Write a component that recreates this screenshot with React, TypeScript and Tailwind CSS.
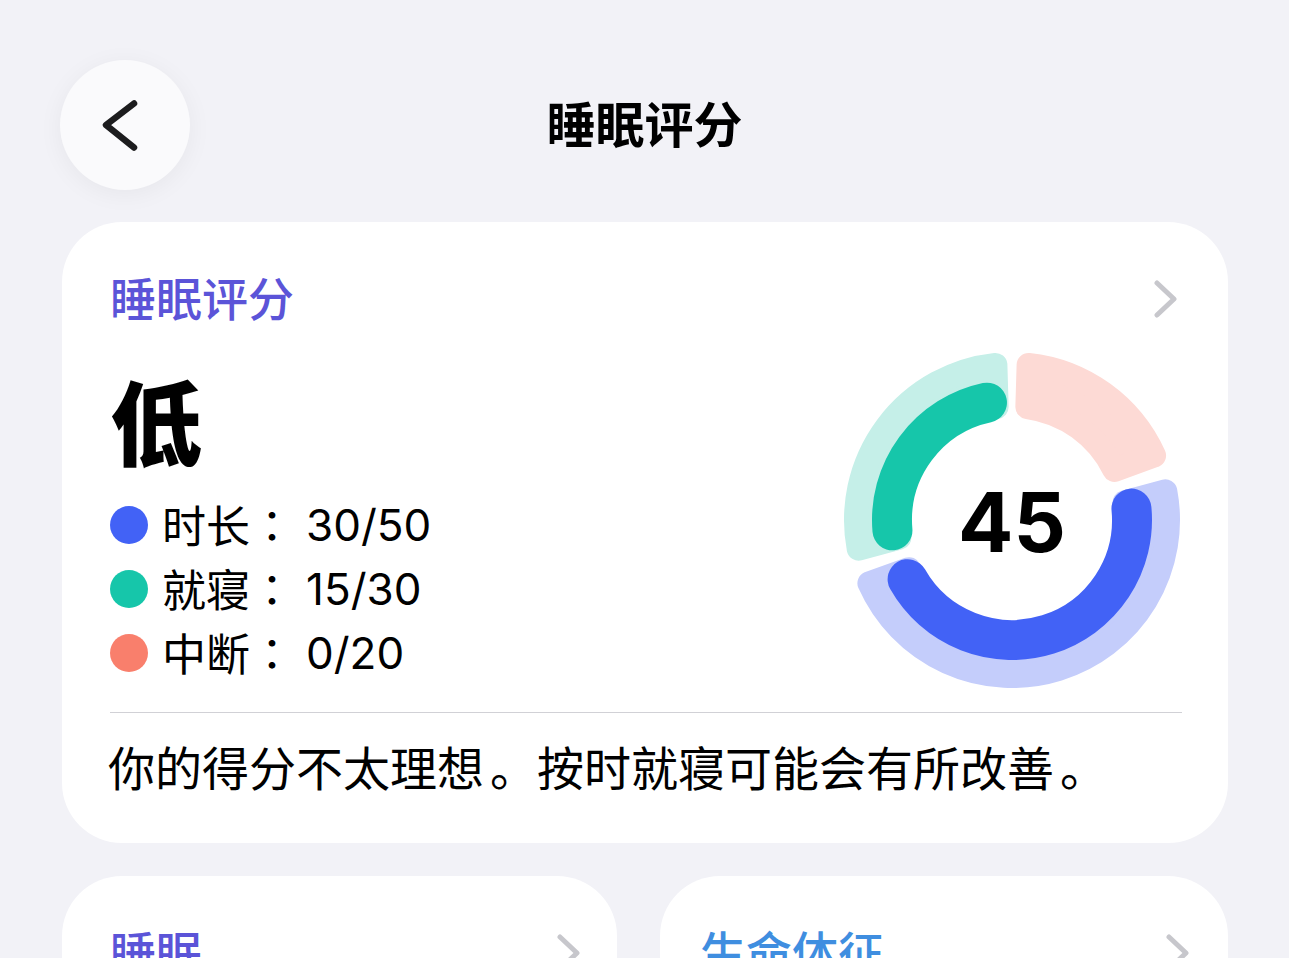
import React from "react";

const C = 170;

function pt(r: number, clock: number): [number, number] {
  const a = ((clock - 90) * Math.PI) / 180;
  return [C + r * Math.cos(a), C + r * Math.sin(a)];
}

function roundedSector(ri: number, ro: number, a1: number, a2: number, cr: number) {
  const rin = ri + cr;
  const rout = ro - cr;
  const dOut = (Math.asin(cr / rout) * 180) / Math.PI;
  const dIn = (Math.asin(cr / rin) * 180) / Math.PI;
  const [x1, y1] = pt(rout, a1 + dOut);
  const [x2, y2] = pt(rout, a2 - dOut);
  const [x3, y3] = pt(rin, a2 - dIn);
  const [x4, y4] = pt(rin, a1 + dIn);
  const largeOut = a2 - a1 - 2 * dOut > 180 ? 1 : 0;
  const largeIn = a2 - a1 - 2 * dIn > 180 ? 1 : 0;
  return `M${x1} ${y1} A${rout} ${rout} 0 ${largeOut} 1 ${x2} ${y2} L${x3} ${y3} A${rin} ${rin} 0 ${largeIn} 0 ${x4} ${y4} Z`;
}

function arc(r: number, a1: number, a2: number) {
  const [x1, y1] = pt(r, a1);
  const [x2, y2] = pt(r, a2);
  const large = a2 - a1 > 180 ? 1 : 0;
  return `M${x1} ${y1} A${r} ${r} 0 ${large} 1 ${x2} ${y2}`;
}

function Ring() {
  const cap = (20 / 120) * (180 / Math.PI);
  const light = [
    { a1: 1.7, a2: 70, c: "#fddad5" },
    { a1: 75, a2: 250.5, c: "#c4cdfb" },
    { a1: 255, a2: 358.3, c: "#c5efe8" },
  ];
  return (
    <svg width="340" height="340" viewBox="0 0 340 340">
      {light.map((s, i) => (
        <path
          key={i}
          d={roundedSector(102, 168, s.a1, s.a2, 12)}
          fill={s.c}
          stroke={s.c}
          strokeWidth={24}
          strokeLinejoin="round"
        />
      ))}
      <path d={arc(120, 75 + cap, 250 - cap)} stroke="#4262f6" strokeWidth={40} strokeLinecap="round" fill="none" />
      <path d={arc(120, 255.5 + cap, 357.5 - cap)} stroke="#16c6aa" strokeWidth={40} strokeLinecap="round" fill="none" />
      <text
        x="170"
        y="172"
        textAnchor="middle"
        dominantBaseline="central"
        fontFamily="Inter, 'Noto Sans', sans-serif"
        fontWeight={700}
        fontSize="82"
        fill="#000"
      >
        45
      </text>
    </svg>
  );
}

function ChevronRight({ className = "" }: { className?: string }) {
  return (
    <svg width="24" height="38" viewBox="0 0 24 38" className={className}>
      <path d="M3 3 L20 19 L3 35" stroke="#c7c7cc" strokeWidth="5" strokeLinecap="round" strokeLinejoin="round" fill="none" />
    </svg>
  );
}

function Legend({ color, label, value }: { color: string; label: string; value: string }) {
  return (
    <div className="flex h-[64px] items-center">
      <div className={`h-[38px] w-[38px] rounded-full ${color}`} />
      <span className="ml-[14px] text-[44px] leading-none text-black">
        {label}
        <span className="font-['Noto_Sans_CJK_TC',sans-serif]">：</span>
      </span>
      <span className="ml-[12px] text-[44px] leading-none text-black">{value}</span>
    </div>
  );
}

function Dot() {
  return <span className="pl-[6px]">。</span>;
}

export default function App() {
  return (
    <div className="h-[958px] w-[1289px] overflow-hidden bg-[#f2f2f7] font-[Inter,'Noto_Sans_CJK_SC',sans-serif]">
      {/* Header */}
      <div className="flex items-center px-[60px] pt-[60px]">
        <div className="flex h-[130px] w-[130px] items-center justify-center rounded-full bg-[#fafafc] shadow-[0_4px_24px_rgba(0,0,0,0.05)]">
          <svg width="48" height="52" viewBox="0 0 48 52" className="ml-[-4px]">
            <path d="M35 4.5 L7 26 L35 48.5" stroke="#1c1c1e" strokeWidth="6.5" strokeLinecap="round" strokeLinejoin="round" fill="none" />
          </svg>
        </div>
        <div className="flex-1 text-center text-[49px] font-bold leading-none text-black">睡眠评分</div>
        <div className="w-[130px]" />
      </div>

      {/* Main card */}
      <div className="ml-[62px] mr-[61px] mt-[32px] rounded-[60px] bg-white pb-[46px] pl-[48px] pr-[46px] pt-[49px]">
        <div className="flex h-[56px] items-center justify-between">
          <span className="text-[46px] font-medium leading-none text-[#5b54d8]">睡眠评分</span>
          <ChevronRight className="mr-[4px]" />
        </div>
        <div className="mt-[23px] flex items-start justify-between">
          <div className="flex flex-col pt-[30px]">
            <div className="text-[92px] font-black leading-none text-black">低</div>
            <div className="mt-[21px] flex flex-col">
              <Legend color="bg-[#4262f6]" label="时长" value="30/50" />
              <Legend color="bg-[#16c6aa]" label="就寝" value="15/30" />
              <Legend color="bg-[#f97f6c]" label="中断" value="0/20" />
            </div>
          </div>
          <Ring />
        </div>
        <div className="mt-[22px] h-px bg-[#d1d1d6]" />
        <div className="ml-[-2px] mt-[28px] h-[56px] text-[47px] leading-[56px] text-black">
          你的得分不太理想<Dot />按时就寝可能会有所改善<Dot />
        </div>
      </div>

      {/* Bottom cards */}
      <div className="ml-[62px] mr-[61px] mt-[33px] flex gap-[43px]">
        <div className="h-[200px] w-[555px] rounded-[60px] bg-white pl-[48px] pr-[36px] pt-[52px]">
          <div className="flex h-[50px] items-center justify-between">
            <span className="text-[46px] font-medium leading-none text-[#5b54d8]">睡眠</span>
            <ChevronRight />
          </div>
        </div>
        <div className="h-[200px] flex-1 rounded-[60px] bg-white pl-[40px] pr-[38px] pt-[52px]">
          <div className="flex h-[50px] items-center justify-between">
            <span className="text-[46px] font-medium leading-none text-[#3f8ee0]">生命体征</span>
            <ChevronRight />
          </div>
        </div>
      </div>
    </div>
  );
}
